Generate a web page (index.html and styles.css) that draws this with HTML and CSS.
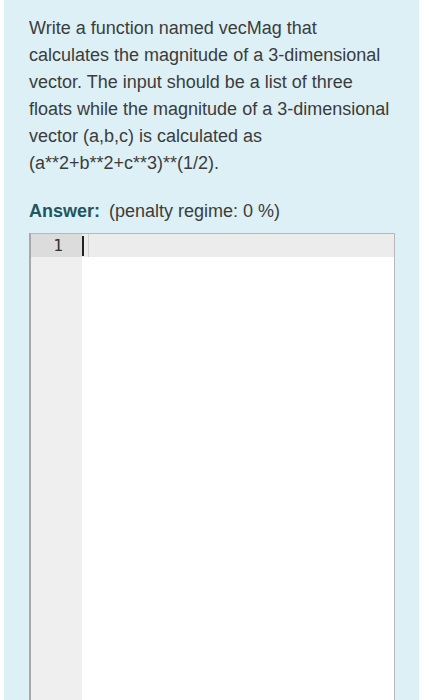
FILE: index.html
```html
<!DOCTYPE html>
<html>
<head>
<meta charset="utf-8">
<link rel="stylesheet" href="styles.css">
</head>
<body>
<div class="panel">
  <div class="question">
    <p>Write a function named vecMag that calculates the magnitude of a 3-dimensional vector. The input should be a list of three floats while the magnitude of a 3-dimensional vector (a,b,c) is calculated as (a**2+b**2+c**3)**(1/2).</p>
  </div>
  <div class="answer-label"><span class="answer-word">Answer:</span> (penalty regime: 0 %)</div>
  <div class="editor">
    <div class="gutter">
      <div class="gutter-line active">1</div>
    </div>
    <div class="content">
      <div class="code-line active"><span class="cursor"></span><span class="cursor-ghost"></span></div>
    </div>
  </div>
</div>
</body>
</html>
```
FILE: styles.css
```css
html, body {
  margin: 0;
  padding: 0;
  background: #ffffff;
}
body {
  width: 429px;
  height: 700px;
  overflow: hidden;
  font-family: "Liberation Sans", Arial, sans-serif;
}
.panel {
  margin: 0 10px 0 4px;
  background: #dcf0f6;
  padding: 15px 0 0 25px;
  height: 700px;
  box-sizing: border-box;
  color: #3c3c3c;
  font-size: 18px;
  line-height: 27px;
  display: flex;
  flex-direction: column;
}
.question p {
  margin: 0;
  padding-right: 20px;
}
.answer-label {
  margin-top: 21px;
}
.answer-word {
  font-weight: bold;
  color: #22555f;
  margin-right: 4px;
}
.editor {
  margin-top: 8px;
  width: 366px;
  flex: 1;
  border: 1px solid #b8b8b8;
  border-left: 2px solid #a8a8a8;
  border-bottom: none;
  box-sizing: border-box;
  display: flex;
  background: #ffffff;
}
.gutter {
  width: 51px;
  background: #efefef;
  flex: none;
}
.gutter-line {
  height: 23px;
  line-height: 23px;
  text-align: right;
  padding-right: 19px;
  font-family: "DejaVu Sans Mono", monospace;
  font-size: 16px;
  color: #333;
}
.gutter-line.active {
  background: #dcdcdc;
}
.content {
  flex: 1;
}
.code-line {
  height: 23px;
  display: flex;
  align-items: stretch;
}
.code-line.active {
  background: #ececec;
}
.cursor {
  width: 2px;
  margin: 2px 0 1px 0;
  background: #222;
}
.cursor-ghost {
  width: 1px;
  margin-left: 4px;
  background: #d2d2d2;
}
```
